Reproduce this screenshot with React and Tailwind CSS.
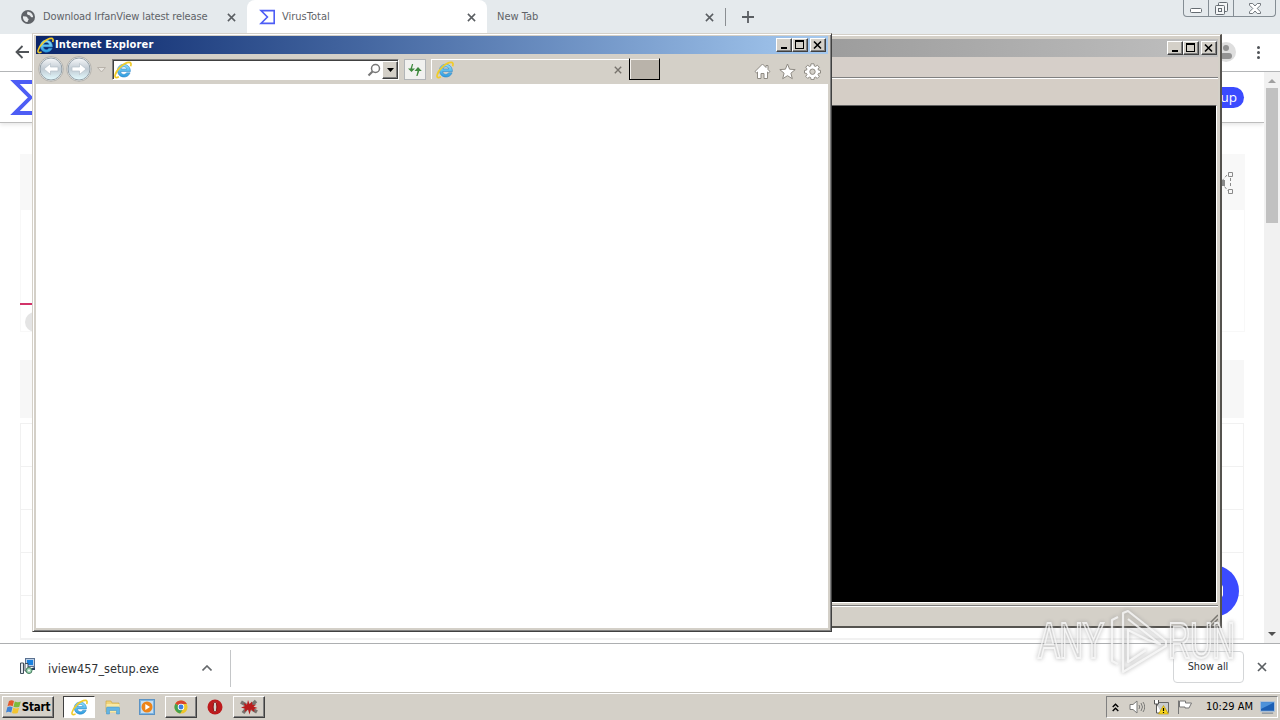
import { useId } from 'react';
import clsx from 'clsx';

function CloseX({ className }) {
  return (
    <svg viewBox="0 0 10 10" className={className} fill="none" stroke="currentColor" strokeWidth="1.7">
      <path d="M1 1l8 8M9 1l-8 8" />
    </svg>
  );
}

function IELogo({ className }) {
  const id = useId();
  return (
    <svg viewBox="0 0 16 16" className={className}>
      <defs>
        <linearGradient id={id} x1="0" y1="0" x2="0" y2="1">
          <stop offset="0" stopColor="#8fe0fb" />
          <stop offset="1" stopColor="#2b9be0" />
        </linearGradient>
      </defs>
      <path
        d="M14.6 9.3H6c.2 3 4.1 3.4 5.1 1.2h3.2c-2 5.8-11.2 4.8-11.2-2.1 0-7.4 11.6-7.5 11.5.9zM6.1 7.1h5.3c-.4-2.6-4.7-2.7-5.3 0z"
        fill={`url(#${id})`}
        stroke="#2a83c4"
        strokeWidth=".5"
        fillRule="evenodd"
      />
      <path
        d="M14.8 4.600c.7-2.100.3-3.400-1.400-3.300C8.600 1.500 2 8 1 12.600c-.5 2.200.9 2.700 3.300 1.400"
        fill="none"
        stroke="#f0cb2a"
        strokeWidth="1.500"
      />
    </svg>
  );
}

function VTLogo({ className }) {
  return (
    <svg viewBox="0 0 40 36" className={className} fill="none" stroke="#4d5df5" strokeWidth="4">
      <path d="M5 2h33v32H5l16-16z" />
    </svg>
  );
}

// Classic Windows caption buttons
function CaptionButton({ children, className }) {
  return (
    <div
      className={clsx(
        'flex h-[14px] w-4 items-center justify-center border border-t-white border-l-white border-r-[#404040] border-b-[#404040] bg-[#d4d0c8] shadow-[inset_-1px_-1px_0_#808080]',
        className
      )}
    >
      <svg viewBox="0 0 12 12" className="h-3 w-3 shrink-0" shapeRendering="crispEdges" fill="none" stroke="#000">
        {children}
      </svg>
    </div>
  );
}

function CaptionButtons() {
  return (
    <div className="flex">
      <CaptionButton>
        <path d="M3 9h6" strokeWidth="2" />
      </CaptionButton>
      <CaptionButton>
        <path d="M1.5 2.5h8v7h-8z" />
        <path d="M1 2h9" strokeWidth="2" />
      </CaptionButton>
      <CaptionButton className="ml-0.5">
        <path d="M2 2.5l7 7M9 2.5l-7 7" strokeWidth="1.6" shapeRendering="auto" />
      </CaptionButton>
    </div>
  );
}

function Tab({ active, icon, title, className }) {
  return (
    <div
      className={clsx(
        'flex h-[34px] items-center pr-[11px] text-[11px] text-[#5f6368]',
        active && 'rounded-t-lg bg-white',
        className
      )}
    >
      {icon}
      <span className="grow pt-px whitespace-nowrap">{title}</span>
      <CloseX className="h-[9px] w-[9px] text-[#5a5e62]" />
    </div>
  );
}

function TabStrip() {
  return (
    <div className="flex h-[34px] bg-[#e5eaed]">
      <Tab
        className="w-[247px] pl-[21px] tracking-[-0.13px]"
        title="Download IrfanView latest release"
        icon={
          <svg viewBox="0 0 14 14" className="mr-2 h-[14px] w-[14px]">
            <circle cx="7" cy="7" r="7" fill="#5f6368" />
            <path d="M2 6.2l3 .2c2 .5 1 2 2.6 2.3.3 1.5-1 1.5-1 3.4C3.7 12 1.6 9.5 2 6.2zM6 1.8c1 1.6-.8 1.4.5 2.7 1 .9 2.6.3 3 1.7.5 1.3 1.7 1 2.6.7C12 3.800 9 1.400 6 1.800z" fill="#e8ebed" />
          </svg>
        }
      />
      <Tab
        active
        className="w-[240px] pl-[12px]"
        title="VirusTotal"
        icon={<VTLogo className="mr-[7px] h-4 w-4" />}
      />
      <Tab className="w-[238px] pl-[10px]" title="New Tab" />
      <div className="mt-2 h-[18px] w-px bg-[#8a8e92]" />
      <svg viewBox="0 0 12 12" className="mt-[11px] ml-4 h-3 w-3" stroke="#5a5e62" strokeWidth="1.8">
        <path d="M6 0v12M0 6h12" />
      </svg>
      <div className="ml-auto mr-[4px] flex h-[17px] rounded-b-[4px] border border-t-0 border-[#848d94]">
        <div className="flex w-[25px] items-center justify-center border-r border-[#848d94]">
          <svg viewBox="0 0 12 5" className="mt-1 h-[5px] w-3" fill="#fff" stroke="#656c72">
            <rect x=".5" y=".5" width="11" height="4" rx="1" />
          </svg>
        </div>
        <div className="flex w-[25px] items-center justify-center border-r border-[#848d94]">
          <svg viewBox="0 0 13 13" className="h-[13px] w-[13px]" fill="#f4f6f7" stroke="#656c72">
            <rect x="3.5" y=".5" width="9" height="9" rx="1" />
            <rect x=".5" y="3.5" width="9" height="9" rx="1" />
            <rect x="3.5" y="6.5" width="3" height="3" />
          </svg>
        </div>
        <div className="flex w-[41px] items-center justify-center">
          <svg viewBox="0 0 12 11" className="h-[11px] w-3" fill="#fff" stroke="#656c72" strokeWidth=".9">
            <path d="M.5.5h3.200L6 3 8.300.5h3.200v1.700L8.200 5.500l3.300 3.300v1.700H8.300L6 8l-2.300 2.500H.5V8.800l3.300-3.300L.5 2.200z" />
          </svg>
        </div>
      </div>
    </div>
  );
}

function AddressBar() {
  return (
    <div className="flex h-[38px] items-center justify-between border-b border-[#b3b5b7] bg-white pr-5 pb-px pl-[15px]">
      <svg viewBox="0 0 14 14" className="h-[14px] w-[14px]" fill="none" stroke="#505458" strokeWidth="1.8">
        <path d="M14 7H1.5M7.5 1L1.5 7l6 6" />
      </svg>
      <div className="flex items-center gap-[21px]">
        <svg viewBox="0 0 20 20" className="h-5 w-5">
          <circle cx="10" cy="10" r="10" fill="#dedede" />
          <circle cx="10" cy="6" r="3" fill="#929292" />
          <rect x="4" y="11" width="12" height="6" rx="3" fill="#929292" />
        </svg>
        <div className="flex flex-col gap-[2px]">
          <span className="h-[3px] w-[3px] rounded-full bg-[#4f5357]" />
          <span className="h-[3px] w-[3px] rounded-full bg-[#4f5357]" />
          <span className="h-[3px] w-[3px] rounded-full bg-[#4f5357]" />
        </div>
      </div>
    </div>
  );
}

const ROWS = [0, 1, 2, 3, 4];

function VirusTotalPage() {
  return (
    <div className="flex h-[571px] overflow-hidden bg-white">
      <div className="flex w-[1264px] flex-col">
        <div className="flex h-[51px] shrink-0 items-center justify-between border-b border-[#bdbdbd] pr-5 pl-[10px] shadow-[0_2px_4px_#e8e8e8]">
          <VTLogo className="h-[35px] w-[39px]" />
          <div className="flex h-[21px] w-[76px] items-center justify-end rounded-full bg-[#3b4bff] pr-[7px] font-['Open_Sans',sans-serif] text-[13.5px] font-medium whitespace-nowrap text-white [font-stretch:normal]">
            Sign up
          </div>
        </div>
        <div className="mt-[31px] ml-5 flex h-[178px] w-[1225px] shrink-0 flex-col border border-[#f8f8f8]">
          <div className="flex h-[55px] items-center justify-end bg-[#f8f8f8] pr-[10px]">
            <svg viewBox="0 0 20 24" className="h-6 w-5" fill="none" stroke="#8a8a8a">
              <path d="M14.5 1.5h4v4h-4zM14.5 18.5h4v4h-4z" />
              <path d="M13 4l-6 7 7 9M16.5 7v10" strokeDasharray="3 2" />
              <path d="M6 9h5v6H6z" fill="#8a8a8a" stroke="none" />
            </svg>
          </div>
        </div>
        <div className="-mt-[29px] ml-5 h-[2px] w-20 shrink-0 bg-[#d23369]" />
        <div className="mt-[7px] ml-[25px] h-5 w-20 shrink-0 rounded-full bg-[#e4e4e4]" />
        <div className="mt-[28px] ml-5 h-[58px] w-[1224px] shrink-0 bg-[#f7f7f7]" />
        <div className="mt-[5px] ml-5 w-[1224px] shrink-0 border border-[#f1f1f1]">
          {ROWS.map((row) => (
            <div key={row} className="h-[43px] border-b border-[#f1f1f1]" />
          ))}
        </div>
      </div>
      <div className="flex w-4 flex-col items-center bg-[#f1f1f1]">
        <svg viewBox="0 0 8 4" className="mt-[7px] mb-[5px] h-1 w-2" fill="#a0a0a0">
          <path d="M4 0l4 4H0z" />
        </svg>
        <div className="h-[135px] w-3 bg-[#c1c1c1]" />
        <svg viewBox="0 0 8 4" className="mt-auto mb-[7px] h-1 w-2" fill="#505050">
          <path d="M4 4L0 0h8z" />
        </svg>
      </div>
    </div>
  );
}

function InstallerIcon() {
  return (
    <svg viewBox="0 0 16 16" className="-mt-1 h-4 w-4">
      <rect x="5.5" y=".5" width="9" height="8" fill="#b9cfe8" stroke="#5b7190" />
      <rect x="7" y="2" width="6" height="5" fill="#1b82e0" />
      <path d="M8 12h7V9l-3 1z" fill="#27405f" />
      <path d="M.5 5h3v10.5h-3z" fill="#e4e8ee" stroke="#3f4c5a" />
      <path d="M5 5.5h3V13H5z" fill="#f4f7fa" stroke="#3f4c5a" />
      <circle cx="9" cy="12.5" r="3" fill="#9fd4b4" stroke="#437a5b" />
      <circle cx="9" cy="12.5" r="1" fill="#fff" />
    </svg>
  );
}

function DownloadBar() {
  return (
    <div className="flex h-[49px] items-center border-t border-[#adafb1] bg-white">
      <div className="flex h-[37px] w-[231px] items-center border-r border-[#c4c6c8] pl-5">
        <InstallerIcon />
        <span className="mt-[3px] ml-3 w-[111px] text-[12.5px] whitespace-nowrap text-[#2f3235]">iview457_setup.exe</span>
        <svg viewBox="0 0 10 6" className="ml-[43px] h-1.5 w-2.5" fill="none" stroke="#66696c" strokeWidth="1.6">
          <path d="M.5 5.5L5 1l4.500 4.500" />
        </svg>
      </div>
      <div className="mt-[-2px] ml-auto flex h-[32px] w-[71px] items-center justify-center rounded-[4px] border border-[#d4d6d8] pr-px text-[10.8px] text-[#2c2f32]">
        Show all
      </div>
      <CloseX className="mt-[-2px] mr-[13px] ml-[13px] h-[10px] w-[10px] text-[#5a5e62]" />
    </div>
  );
}

function ConsoleWindow() {
  return (
    <div className="absolute top-[34px] left-[500px] flex h-[594px] w-[722px] flex-col border-t border-l border-t-[#d4d0c8] border-l-[#d4d0c8] border-r-2 border-b-2 border-r-[#55534f] border-b-[#55534f] bg-[#d4d0c8] pt-[4px] pr-[2px] shadow-[inset_0_1px_0_#fff]">
      <div className="flex h-[18px] items-center justify-end bg-gradient-to-r from-[#808080] to-[#c0c0c0] pr-px">
        <CaptionButtons />
      </div>
      <div className="h-5 bg-[#d6cfc9]" />
      <div className="h-[28px] border-t border-[#808080] bg-[#d5cec6] shadow-[inset_0_1px_0_#fff]" />
      <div className="mr-[1px] h-[498px] border-t border-r border-b border-t-[#606060] border-r-white border-b-white bg-black" />
      <div className="mt-[2px] flex grow items-end justify-end border-t border-[#808080] shadow-[inset_0_1px_0_#fff]">
        <svg viewBox="0 0 12 12" className="h-3 w-3" stroke="#77746e" strokeWidth="1.5">
          <path d="M1 12L12 1M5 12l7-7M9 12l3-3" />
        </svg>
      </div>
    </div>
  );
}

function NavCircle({ flip }) {
  const id = useId();
  return (
    <svg viewBox="0 0 26 26" className="h-[26px] w-[26px]">
      <defs>
        <linearGradient id={id} x1="0" y1="0" x2="0" y2="1">
          <stop offset="0" stopColor="#f7f8fa" />
          <stop offset=".5" stopColor="#c0cad2" />
          <stop offset="1" stopColor="#e4fbff" />
        </linearGradient>
      </defs>
      <circle cx="13" cy="13" r="12.3" fill="#f1f1ef" stroke="#a5a39e" strokeWidth=".8" />
      <circle cx="13" cy="13" r="11" fill={`url(#${id})`} stroke="#8b979f" strokeWidth=".9" />
      <path
        d="M6 13l6.500-5.500v3.500h7.500v4h-7.500v3.500z"
        fill="#fff"
        stroke="#b4c0c9"
        strokeWidth=".7"
        transform={flip ? 'translate(26 0) scale(-1 1)' : undefined}
      />
    </svg>
  );
}

function IEToolbar() {
  return (
    <div className="flex h-[30px] bg-[#d4d0c8]">
      <div className="mt-[2px] ml-[2px] flex h-[26px] w-[56px] gap-[2px] rounded-full">
        <NavCircle />
        <NavCircle flip />
      </div>
      <svg viewBox="0 0 9 6" className="mt-[13px] ml-[3px] h-1.5 w-[9px]" fill="#e7e4df" stroke="#b8b2aa">
        <path d="M.5.5h8l-4 4.500z" />
      </svg>
      <div className="mt-[5px] ml-[6px] flex h-[21px] w-[287px] border border-t-[#808080] border-l-[#808080] border-r-white border-b-white bg-white shadow-[inset_1px_1px_0_#404040]">
        <IELogo className="mt-px ml-px h-[18px] w-[18px]" />
        <svg viewBox="0 0 14 14" className="mt-[3px] ml-auto h-[14px] w-[14px]" fill="none" stroke="#777">
          <circle cx="8.5" cy="5.5" r="4" strokeWidth="1.5" />
          <path d="M5.5 8.5L1.5 12.5" strokeWidth="2.2" />
        </svg>
        <div className="mt-px ml-px flex w-[16px] items-center justify-center border border-t-white border-l-white border-r-[#404040] border-b-[#404040] bg-[#d4d0c8] shadow-[inset_-1px_-1px_0_#808080]">
          <svg viewBox="0 0 7 4" className="h-1 w-[7px]">
            <path d="M0 0h7L3.500 4z" />
          </svg>
        </div>
      </div>
      <div className="mt-[5px] ml-[5px] flex h-[21px] w-[22px] items-center justify-center border border-[#b2b5b8] bg-[#f1f1ef]">
        <svg viewBox="0 0 16 14" className="h-[14px] w-4" fill="#3f8a3e">
          <path d="M5 1h1.200L5 5.500h3L4.500 9 1 5.500h2.500z" />
          <path d="M10.500 13H9.300l1.200-5h-3L11 4l3.800 4h-2.500z" />
        </svg>
      </div>
      <div className="mt-[5px] ml-[5px] flex h-[20px] w-[198px] items-center border-t border-l border-white pr-[7px] pl-[4px]">
        <IELogo className="h-[18px] w-[18px]" />
        <CloseX className="ml-auto h-2 w-2 text-[#76726c]" />
      </div>
      <div className="mt-[4px] h-[22px] w-[31px] border border-t-[#d4d0c8] border-l-black border-r-black border-b-black bg-[#b9b3aa] shadow-[inset_1px_1px_0_#f3f0ec]" />
      <div className="mt-[9px] mr-[7px] ml-auto flex h-[17px] gap-2">
        <svg viewBox="0 0 17 17" className="h-[17px] w-[17px]" fill="#fff" stroke="#8e8a83">
          <path d="M8.5 1L1 8.500l1.500 1.300 1-.8v6.500H7v-5h3v5h3.500V9l1 .8L16 8.500l-2-2v-4h-2v2z" />
        </svg>
        <svg viewBox="0 0 17 17" className="h-[17px] w-[17px]" fill="#fff" stroke="#8e8a83">
          <path d="M8.5 1l2.100 5.200 5.600.4-4.300 3.600 1.400 5.500-4.800-3-4.800 3 1.400-5.500L.8 6.600l5.600-.4z" />
        </svg>
        <svg viewBox="0 0 17 17" className="h-[17px] w-[17px]" fill="#fff" stroke="#8e8a83" fillRule="evenodd">
          <path d="M7 .8h3l.3 2.200 1.200.5 1.800-1.300 2 2L14 6l.5 1.100 2 .3v2.700l-2 .3L14 11.600l1.300 1.800-2 2-1.800-1.300-1.200.5-.3 2H7l-.3-2-1.200-.5-1.800 1.300-2-2L3 11.600l-.5-1.200-2-.3V7.400l2-.3L3 6 1.700 4.200l2-2 1.800 1.300L6.700 3zM8.500 6a2.700 2.700 0 100 5.400 2.700 2.700 0 000-5.400z" />
        </svg>
      </div>
    </div>
  );
}

function ExplorerWindow() {
  return (
    <div className="absolute top-[33px] left-[32px] flex h-[599px] w-[800px] flex-col border border-t-[#d4d0c8] border-l-[#d4d0c8] border-r-[#404040] border-b-[#404040] bg-[#d4d0c8] px-[3px] pt-[2px] pb-[3px] shadow-[inset_1px_1px_0_#fff,inset_-1px_-1px_0_#808080]">
      <div className="flex h-[18px] shrink-0 items-center bg-gradient-to-r from-[#0a246a] to-[#a6caf0] pr-[2px] pl-px text-[11px] font-bold text-white">
        <IELogo className="h-[17px] w-[17px]" />
        <span className="ml-[1px] grow pt-px tracking-[0.15px]">Internet Explorer</span>
        <CaptionButtons />
      </div>
      <IEToolbar />
      <div className="grow bg-white" />
    </div>
  );
}

function TaskButton({ pressed, className, children }) {
  return (
    <div
      className={clsx(
        'flex h-[22px] items-center justify-center border',
        pressed
          ? 'border-t-[#404040] border-l-[#404040] border-r-white border-b-white bg-white'
          : 'border-t-white border-l-white border-r-[#404040] border-b-[#404040] bg-[#d4d0c8] shadow-[inset_-1px_-1px_0_#808080]',
        className
      )}
    >
      {children}
    </div>
  );
}

function Taskbar() {
  return (
    <div className="flex h-[28px] items-center border-t border-[#c4c1ba] bg-[#d4d0c8] pt-[1px] shadow-[inset_0_1px_0_#fff]">
      <TaskButton className="ml-[2px] w-[52px] text-[11.5px] font-bold text-black">
        <svg viewBox="0 0 16 16" className="h-4 w-4 shrink-0">
          <path d="M3 2c2-1 3-1 5 0L6.700 7.200c-2-.9-3.500-.8-5.200 0z" fill="#e2592c" />
          <path d="M8.800 2.500c2 1 4 1 6 0L13.300 7.700c-2 .9-3.800.8-5.800 0z" fill="#7cba3d" />
          <path d="M1.300 8.200c2-.9 3.300-.9 5.200 0L5.200 13.400c-2-.9-3.400-.9-5.200 0z" fill="#3f83d6" />
          <path d="M7.300 8.700c2 .9 3.800.9 5.800 0l-1.400 5.200c-2 .9-3.800.9-5.700 0z" fill="#f2c431" />
        </svg>
        <span className="pt-px tracking-[-0.2px]">Start</span>
      </TaskButton>
      <TaskButton pressed className="ml-[9px] w-8">
        <IELogo className="h-[17px] w-[17px]" />
      </TaskButton>
      <svg viewBox="0 0 16 16" className="ml-[10px] h-4 w-4">
        <path d="M1 2h5l1 2h7v9H1z" fill="#efd37a" stroke="#cda947" strokeWidth=".7" />
        <path d="M1.500 5h13v8.500h-13z" fill="#f9e9a4" />
        <path d="M1.500 15V9q0-1 1-1h11q1 0 1 1v6h-3v-3.500h-7V15z" fill="#63b4e4" stroke="#3f90c4" strokeWidth=".5" />
      </svg>
      <svg viewBox="0 0 16 16" className="ml-[18px] h-4 w-4">
        <rect x=".5" y=".5" width="15" height="15" fill="#7db5e2" stroke="#5c93c4" />
        <rect x="2" y="2" width="12" height="12" fill="#c7def1" />
        <circle cx="8" cy="8" r="5.500" fill="#ed8419" />
        <path d="M6.300 5l4.700 3-4.700 3z" fill="#fff" />
      </svg>
      <TaskButton className="ml-[10px] w-8">
        <svg viewBox="0 0 16 16" className="h-[14px] w-[14px]">
          <circle cx="8" cy="8" r="7.500" fill="#efc62a" />
          <path d="M8 8L1.500 4.200A7.500 7.500 0 0114.700 4.700H8z" fill="#d9442f" />
          <path d="M8 8L1.500 4.200A7.500 7.500 0 007 15.400l4-6z" fill="#43a14f" />
          <circle cx="8" cy="8" r="3.700" fill="#fff" />
          <circle cx="8" cy="8" r="2.800" fill="#3c7ee0" />
        </svg>
      </TaskButton>
      <svg viewBox="0 0 16 16" className="ml-[10px] h-4 w-4">
        <circle cx="8" cy="8" r="7.500" fill="#bd1a1c" />
        <ellipse cx="8" cy="8" rx="1.900" ry="5.200" fill="#d4d0c8" stroke="#861012" />
      </svg>
      <TaskButton className="ml-[10px] w-8">
        <svg viewBox="0 0 18 16" className="h-4 w-[18px]">
          <path d="M1 3l5 3M3 14l4-5M16 2l-5 5M17 13l-5-3" stroke="#77736f" strokeWidth="3.500" />
          <path d="M8 1l1.500 4 2.500-2.500.5 3.500 4-.500-3 2 4 1.500-3.500 1 .5 3-3.500-2.500-1.500 5-1.500-5-3.500 2.500L5 9.800 1 8.500l4-1.500-1.500-3L7 5.500z" fill="#b91c1c" />
        </svg>
      </TaskButton>
      <div className="ml-auto mr-[2px] flex h-[22px] w-[172px] items-center border border-t-[#808080] border-l-[#808080] border-r-white border-b-white pl-[5px]">
        <svg viewBox="0 0 7 9" className="h-[9px] w-[7px]" fill="none" stroke="#000" strokeWidth="1.4">
          <path d="M.7 4l2.800-2.800L6.300 4M.7 8l2.800-2.800L6.300 8" />
        </svg>
        <svg viewBox="0 0 16 16" className="ml-[10px] h-4 w-4" fill="none" stroke="#7a7a78">
          <path d="M1 5.500h3L8 2v12l-4-3.500H1z" fill="#fff" />
          <path d="M10 6q1.500 2 0 4M12 4q3 4 0 8M14 3q3.500 5 0 10" />
        </svg>
        <svg viewBox="0 0 16 16" className="ml-[8px] h-4 w-4">
          <path d="M4.500 3.500h11v10h-11z" fill="#c9cccd" stroke="#666" />
          <path d="M1.500 1v4h4V1M3.500 5v9h5" fill="#fff" stroke="#555" />
          <path d="M10.500 6.500L15.500 15h-10z" fill="#f8d51d" stroke="#b18e00" strokeWidth=".6" />
          <path d="M10.500 9v3M10.500 13v1" stroke="#000" strokeWidth="1.2" />
        </svg>
        <svg viewBox="0 0 16 16" className="ml-[8px] h-4 w-4" fill="#fff" stroke="#777">
          <path d="M1.500 15V1.500M2.500 2h6v2h6l-2.500 5H8V8H2.500z" />
        </svg>
        <span className="ml-[13px] pt-px text-[11px] whitespace-nowrap text-black">10:29 AM</span>
        <svg viewBox="0 0 16 13" className="mr-[2px] ml-auto h-[13px] w-[15px] shrink-0">
          <rect x=".5" y=".5" width="15" height="10" fill="#1c5fb4" stroke="#aac2de" />
          <path d="M1 1h14L1 8z" fill="#4d92da" />
          <path d="M2 12.500h12" stroke="#6b7a8c" />
        </svg>
      </div>
    </div>
  );
}

function Watermark() {
  return (
    <div className="absolute top-[607px] left-[1038px] flex h-[68px] w-[196px] items-center font-['Liberation_Sans',sans-serif] text-[50px] leading-none text-transparent opacity-85 drop-shadow-[0_0_2px_#999] [-webkit-text-stroke:2px_#f4f4f4]">
      <span className="w-[66px] origin-left scale-x-[.66] tracking-[-1px]">ANY</span>
      <svg viewBox="0 0 60 66" className="ml-[3px] h-[66px] w-[60px] shrink-0" fill="none" stroke="#f4f4f4" strokeWidth="2.2" strokeLinejoin="round">
        <path d="M11 9l-6 3v41l6 3M16 24V5l5-2 38 30v5L21 61l-5 3V24" />
        <path d="M21 11l32 25-12-4L21 22v32l18-12" />
      </svg>
      <span className="ml-[1px] w-[66px] origin-left scale-x-[.63] tracking-[-1px]">RUN</span>
    </div>
  );
}

export default function App() {
  return (
    <div className="relative h-[720px] w-[1280px] overflow-hidden bg-white font-['DejaVu_Sans_Condensed','DejaVu_Sans',sans-serif] [font-stretch:condensed]">
      <TabStrip />
      <AddressBar />
      <VirusTotalPage />
      <DownloadBar />
      <Taskbar />
      {/* floating support chat button */}
      <div className="absolute top-[565px] left-[1187px] flex h-[52px] w-[52px] items-center justify-end rounded-full bg-[#3b4bff] pr-4">
        <div className="h-3 w-5 rounded-xs border-2 border-white" />
      </div>
      <ConsoleWindow />
      <ExplorerWindow />
      <Watermark />
    </div>
  );
}
